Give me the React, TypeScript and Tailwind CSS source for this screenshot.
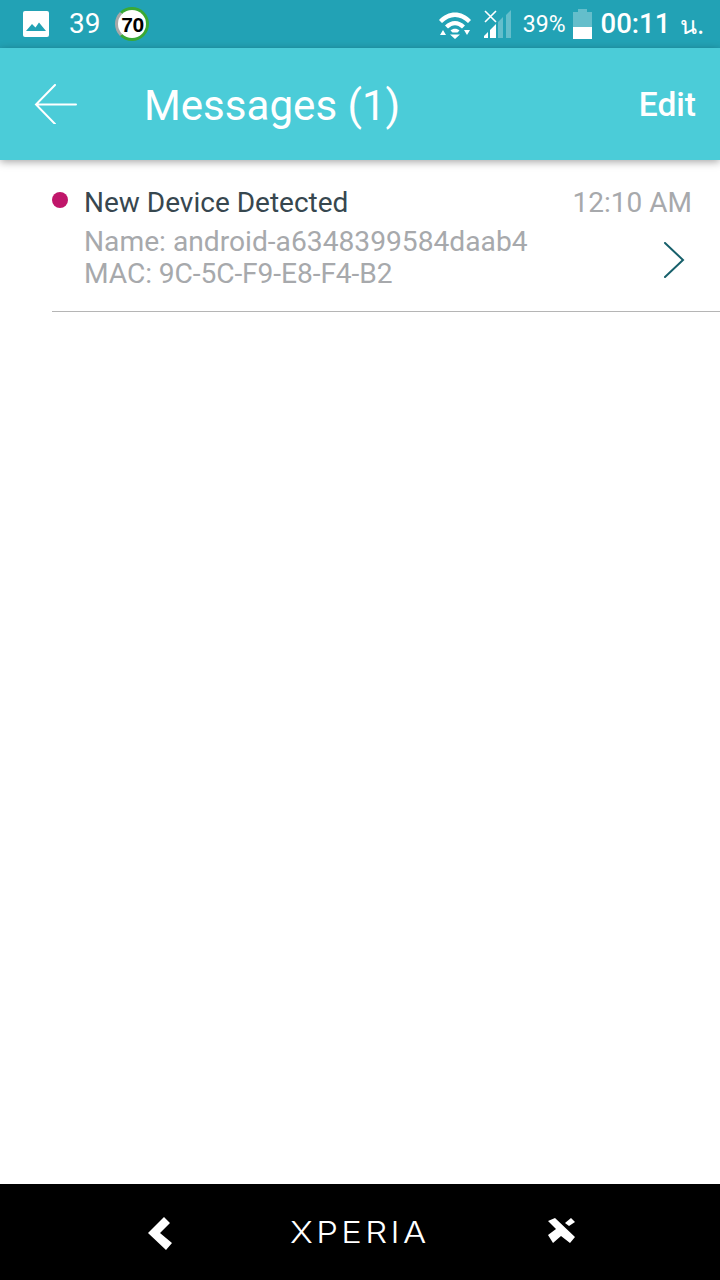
const font = { fontFamily: 'Roboto, "Noto Sans", sans-serif' }

const StatusBar = () => (
  <div className="h-12 shrink-0 bg-[#22a2b5] flex items-center text-white">
    <svg className="ml-[23px] w-[26px] h-[26px]" viewBox="0 0 26 26">
      <rect width="26" height="26" rx="2" fill="#fff" />
      <path d="M3 20 L9 13 L12.5 16.5 L16 11.5 L23 20 Z" fill="#22a2b5" />
    </svg>
    <span className="ml-5 text-[28px] leading-none font-normal">39</span>
    <div className="ml-[15px] w-[34px] h-[34px] rounded-full bg-white border-[3px] border-[#3aa935] border-l-[#a8a8a8] flex items-center justify-center">
      <span className="text-[21px] leading-none font-bold text-black tracking-[-0.5px]" style={{ fontFamily: '"Liberation Sans", sans-serif' }}>70</span>
    </div>
    <div className="ml-auto flex items-center">
      <svg className="w-[34px] h-[29px]" viewBox="0 0 34 29">
        <path d="M1 10 C10 0 24 0 33 10 L30 13 C22 5 12 5 4 13 Z" fill="#fff" />
        <path d="M7 15.5 C13 9.5 21 9.5 27 15.5 L24 18.5 C19.5 14 14.5 14 10 18.5 Z" fill="#fff" />
        <path d="M12.5 20.5 C15 18 19 18 21.5 20.5 L19.5 22.5 L14.5 22.5 Z" fill="#fff" />
        <path d="M2 25 L5 20 L8 25 Z M12 24.5 H22 L17 29 Z M26 20 H32 L29 25 Z" fill="#fff" />
      </svg>
      <svg className="ml-3 w-7 h-[30px]" viewBox="0 0 28 30">
        <path d="M1 2 L12 13 M12 2 L1 13" stroke="#fff" strokeWidth="1.6" fill="none" />
        <path d="M0 29 V27 L4 23 V29 Z M6 29 V21 L12 15 V29 Z" fill="#fff" />
        <path d="M14 29 V13 L19 8 V29 Z M22 29 V6 L27 1 V29 Z" fill="#fff" opacity="0.3" />
      </svg>
      <span className="ml-[11px] text-[23px] leading-none font-normal">39%</span>
      <svg className="ml-[7px] w-[19px] h-[30px]" viewBox="0 0 19 30">
        <path d="M5 0 H14 V3 H19 V30 H0 V3 H5 Z" fill="#fff" opacity="0.3" />
        <rect y="18" width="19" height="12" fill="#fff" />
      </svg>
      <span className="ml-[9px] text-[27.5px] leading-none font-medium">00:11</span>
      <span className="ml-[10px] mr-[16px] text-[25px] leading-none" style={{ fontFamily: '"Noto Sans", "DejaVu Sans", sans-serif' }}>น.</span>
    </div>
  </div>
)

const Header = () => (
  <div className="relative z-10 h-28 shrink-0 bg-[#4bccd8] flex items-center text-white shadow-[0_2px_8px_rgba(0,0,0,0.35)]">
    <svg className="ml-[34px] w-11 h-10" viewBox="0 0 44 40">
      <path d="M21 1 L2 20.5 L21 40 M2 20.5 H42" stroke="#fff" strokeWidth="2" strokeLinecap="round" fill="none" />
    </svg>
    <h1 className="ml-[66px] mt-1 text-[42.1px] leading-none">Messages (1)</h1>
    <button className="ml-auto mr-6 mt-[2px] text-[33.5px] leading-none font-medium">Edit</button>
  </div>
)

const MessageRow = () => (
  <div className="ml-[52px] h-[152px] border-b border-[#b5b5b5] pt-[27px] pr-7 flex">
    <div className="w-4 h-4 mt-[5px] rounded-full bg-[#c0166a] shrink-0" />
    <div className="ml-4 flex-1 pt-[2px]">
      <div className="flex items-center justify-between h-7">
        <span className="text-[28px] leading-none text-[#37474f]">New Device Detected</span>
        <span className="text-[28px] leading-none text-[#a7a9ac]">12:10 AM</span>
      </div>
      <div className="flex items-center justify-between">
        <div className="mt-[9px] text-[28.2px] leading-[32px] text-[#a7a9ac]">
          <div>Name: android-a6348399584daab4</div>
          <div className="tracking-[-0.1px]">MAC: 9C-5C-F9-E8-F4-B2</div>
        </div>
        <svg className="mt-[12px] mr-[7px] w-[22px] h-9" viewBox="0 0 22 36">
          <path d="M2 1 L20 18 L2 35" stroke="#17606b" strokeWidth="2" strokeLinecap="round" fill="none" />
        </svg>
      </div>
    </div>
  </div>
)

const NavBar = () => (
  <div className="h-24 shrink-0 bg-black flex items-center justify-center relative text-white">
    <svg className="absolute left-[148px] top-[33px] w-6 h-[33px]" viewBox="0 0 24 33">
      <path d="M16 0 L22 6 L12 16 L24 26 L18 33 L0 16 Z" fill="#fff" />
    </svg>
    <span className="text-[30px] leading-none font-light tracking-[3px] scale-x-[1.15]" style={{ fontFamily: 'Inter, sans-serif' }}>XPERIA</span>
    <svg className="absolute left-[547px] top-[33px] w-[29px] h-[27px]" viewBox="0 0 29 27">
      <path d="M1 4 L8 1 L28 20 L23 26 L14 19 L6 26 L1 18 L9 12 Z" fill="#fff" />
      <path d="M18 6 L24 1 L28 5 L22 9 Z" fill="#fff" />
    </svg>
  </div>
)

export default function App() {
  return (
    <div className="w-[720px] h-[1280px] flex flex-col bg-white overflow-hidden" style={font}>
      <StatusBar />
      <Header />
      <div className="flex-1">
        <MessageRow />
      </div>
      <NavBar />
    </div>
  )
}
